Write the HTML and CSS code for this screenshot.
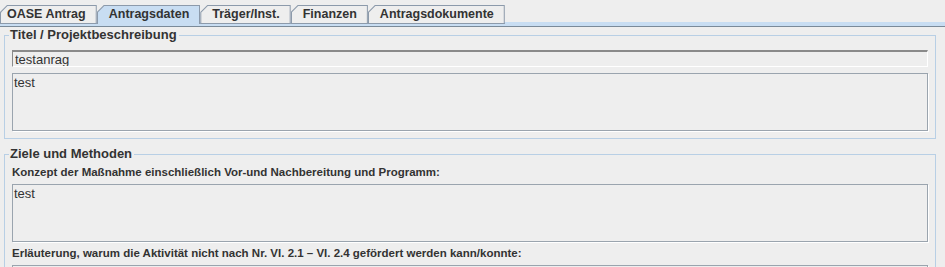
FILE: index.html
```html
<!DOCTYPE html>
<html lang="de">
  <head>
    <meta charset="UTF-8" />
    <meta name="viewport" content="width=device-width, initial-scale=1.0" />
    <title>Antragsdaten</title>
    <link rel="stylesheet" href="styles.css">
  </head>
  <body>
    <div class="tabs">
      <div class="tab tab-first"><span>OASE Antrag</span></div>
      <div class="tab selected"><span>Antragsdaten</span></div>
      <div class="tab"><span>Träger/Inst.</span></div>
      <div class="tab"><span>Finanzen</span></div>
      <div class="tab"><span>Antragsdokumente</span></div>
    </div>
    <div class="band"></div>

    <div class="content">
      <fieldset class="group">
        <legend>Titel / Projektbeschreibung</legend>
        <input type="text" class="field" value="testanrag" />
        <textarea class="area">test</textarea>
      </fieldset>

      <fieldset class="group group-labels">
        <legend>Ziele und Methoden</legend>
        <div class="label">Konzept der Maßnahme einschließlich Vor-und Nachbereitung und Programm:</div>
        <textarea class="area">test</textarea>
        <div class="label">Erläuterung, warum die Aktivität nicht nach Nr. VI. 2.1 – VI. 2.4 gefördert werden kann/konnte:</div>
        <textarea class="area"></textarea>
      </fieldset>
    </div>
  </body>
</html>
```

FILE: styles.css
```css
body {
  margin: 0;
  background-color: #eeeeee;
  font-family: "Liberation Sans", Arial, sans-serif;
  color: #333333;
  overflow: hidden;
}

.tabs {
  display: flex;
  padding-top: 5px;
  height: 18px;
}

.tab {
  background-color: #8c9aab;
  padding: 1px 1px 0 1px;
  clip-path: polygon(0 7px, 7px 0, 100% 0, 100% 100%, 0 100%);
  border-bottom: 1px solid #8c9aab;
  height: 17px;
}

.tab span {
  display: block;
  height: 17px;
  line-height: 17px;
  padding: 0 10px 0 11px;
  font-size: 12.5px;
  font-weight: bold;
  background-color: #eeeeee;
  clip-path: polygon(0 6.5px, 6.5px 0, 100% 0, 100% 100%, 0 100%);
}

.tab-first span {
  padding-left: 6px;
}

.tab.selected {
  border-bottom: none;
  height: 18px;
}

.tab.selected span {
  height: 18px;
  background-color: #c8ddf2;
}

.band {
  height: 3px;
  background-color: #c8ddf2;
  border-bottom: 1px solid #7a8a99;
  border-top: 1px solid #c8ddf2;
  margin-top: -1px;
}

.content {
  padding: 1px 9px 0 4px;
}

.group {
  margin: 0 0 8px 0;
  padding: 8px 7px 7px 7px;
  border: 1px solid #b8cfe5;
  min-width: 0;
}

.group-labels {
  padding-top: 2px;
}

.group legend {
  margin-left: -3px;
  padding: 0 2px 0 1px;
  font-size: 13px;
  font-weight: bold;
  line-height: 14px;
}

.field {
  display: block;
  box-sizing: border-box;
  width: 100%;
  height: 17px;
  margin: 0 0 6px 0;
  padding: 0 2px;
  font-family: "Liberation Sans", Arial, sans-serif;
  font-size: 13px;
  color: #333333;
  background-color: #eeeeee;
  border: 1px solid #ffffff;
  border-top: 2px solid #8a8a8a;
  border-left: 1px solid #8a8a8a;
  outline: none;
}

.area {
  display: block;
  box-sizing: border-box;
  width: 100%;
  height: 58px;
  margin: 0;
  padding: 1px 1px;
  resize: none;
  font-family: "Liberation Sans", Arial, sans-serif;
  font-size: 13px;
  line-height: 15px;
  color: #333333;
  background-color: #eeeeee;
  border: 1px solid #9aa4ae;
  box-shadow: 1px 1px 0 #ffffff;
  overflow: hidden;
}

.label {
  margin: 2px 0 5px 0;
  font-size: 11.5px;
  font-weight: bold;
  line-height: 14px;
}

.area + .label {
  margin-top: 4px;
}
```
